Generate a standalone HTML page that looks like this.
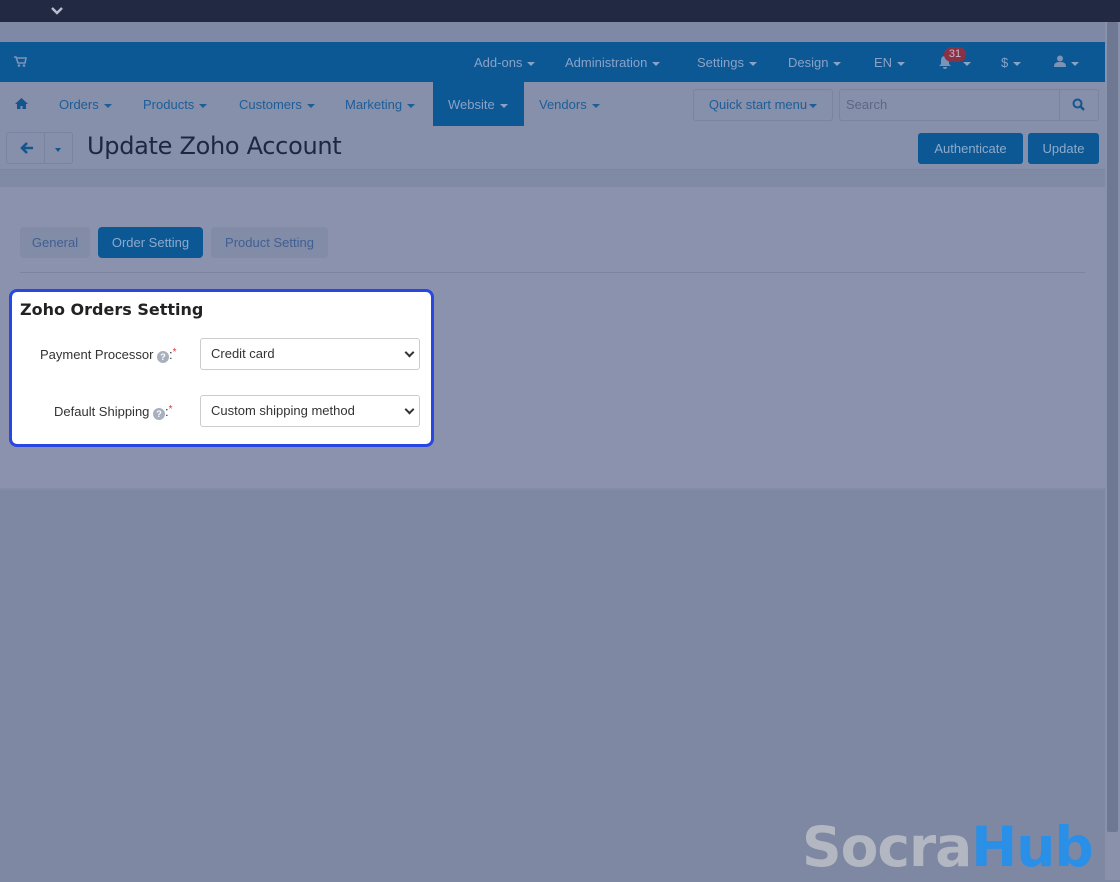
<!DOCTYPE html>
<html><head><meta charset="utf-8"><style>
*{box-sizing:border-box;margin:0;padding:0}
body{width:1120px;height:880px;overflow:hidden;background:#7f88a3;font-family:"Liberation Sans","DejaVu Sans",sans-serif;position:relative;font-size:13px}
.abs{position:absolute}
.top{left:0;top:0;width:1120px;height:22px;background:#222943}
.strip{left:0;top:22px;width:1105px;height:20px;background:#7f88a4}
.blue{left:0;top:42px;width:1105px;height:40px;background:#0b5895}
.nav{left:0;top:82px;width:1105px;height:45px;background:#8690aa}
.hdr{left:0;top:127px;width:1105px;height:43px;background:#8690aa;border-bottom:1px solid #7d86a1}
.sep{left:0;top:170px;width:1105px;height:17px;background:#808aa5}
.panel{left:0;top:187px;width:1105px;height:303px;background:#8a92ad;border-bottom:2px solid #838ca7}
.scroll{left:1105px;top:22px;width:15px;height:858px;background:#8a92ab}
.thumb{left:1107px;top:22px;width:11px;height:810px;background:#6f7893;border-radius:2px}
.t{color:#5b6f9a;white-space:nowrap}
.tw{color:#8aa2c6;white-space:nowrap}
.caret{display:inline-block;width:0;height:0;border-left:4px solid transparent;border-right:4px solid transparent;border-top:4px solid currentColor;vertical-align:middle;margin-left:5px}
.btn{background:#0c5895;color:#8eaacb;border-radius:3px;text-align:center;line-height:31px;font-size:13px}
.tab{border-radius:4px;line-height:31px;text-align:center;font-size:13px}
.sel{background:#fff;border:1px solid #ccc;border-radius:3px;color:#333;font-size:13px;padding-left:10px;line-height:30px}
.sel:after{content:"";position:absolute;right:6px;top:10px;width:5px;height:5px;border-right:2px solid #333;border-bottom:2px solid #333;transform:rotate(45deg)}
.q{display:inline-block;width:12px;height:12px;border-radius:50%;background:#a8b0bd;color:#fff;font-size:9px;font-weight:bold;text-align:center;line-height:12px;vertical-align:-1px}
.lbl{color:#333;font-size:13px;white-space:nowrap}
</style></head><body>
<div class="abs top"></div>
<svg class="abs" style="left:51px;top:7px" width="12" height="8"><path d="M1 1l5 5 5-5" stroke="#b9bdcc" stroke-width="2.4" fill="none"/></svg>
<div class="abs strip"></div>
<div class="abs blue"></div>
<svg class="abs" style="left:14px;top:56px" width="13" height="11"><path d="M0 1h2l2 6h7l1-5H3" stroke="#7d93b6" stroke-width="1.6" fill="none"/><circle cx="5" cy="9.5" r="1.3" fill="#7d93b6"/><circle cx="10" cy="9.5" r="1.3" fill="#7d93b6"/></svg>
<div class="abs tw" style="left:474px;top:55px">Add-ons<span class="caret"></span></div>
<div class="abs tw" style="left:565px;top:55px">Administration<span class="caret"></span></div>
<div class="abs tw" style="left:697px;top:55px">Settings<span class="caret"></span></div>
<div class="abs tw" style="left:788px;top:55px">Design<span class="caret"></span></div>
<div class="abs tw" style="left:874px;top:55px">EN<span class="caret"></span></div>
<svg class="abs" style="left:938px;top:55px" width="14" height="14"><path d="M7 1c-3 0-4 2-4 5v3l-2 2h12l-2-2V6c0-3-1-5-4-5z M5 12a2 2 0 004 0" fill="#7d93b6"/></svg>
<div class="abs" style="left:944px;top:47px;width:22px;height:15px;border-radius:8px;background:#8a3245;color:#c8b8c5;font-size:11px;text-align:center;line-height:15px">31</div>
<div class="abs tw" style="left:958px;top:55px"><span class="caret"></span></div>
<div class="abs tw" style="left:1001px;top:55px">$<span class="caret"></span></div>
<svg class="abs" style="left:1054px;top:55px" width="12" height="12"><circle cx="6" cy="3.5" r="3" fill="#7d93b6"/><path d="M0 12c0-4 2-5 6-5s6 1 6 5z" fill="#7d93b6"/></svg>
<div class="abs tw" style="left:1066px;top:55px"><span class="caret"></span></div>

<div class="abs nav"></div>
<svg class="abs" style="left:15px;top:98px" width="13" height="11"><path d="M6.5 0L0 6h2v5h3.5V8h2v3H11V6h2z" fill="#14558f"/></svg>
<div class="abs t" style="left:59px;top:97px;color:#1d5d98">Orders<span class="caret"></span></div>
<div class="abs t" style="left:143px;top:97px;color:#1d5d98">Products<span class="caret"></span></div>
<div class="abs t" style="left:239px;top:97px;color:#1d5d98">Customers<span class="caret"></span></div>
<div class="abs t" style="left:345px;top:97px;color:#1d5d98">Marketing<span class="caret"></span></div>
<div class="abs" style="left:433px;top:82px;width:91px;height:44px;background:#0b5895"></div>
<div class="abs tw" style="left:448px;top:97px">Website<span class="caret"></span></div>
<div class="abs t" style="left:539px;top:97px;color:#1d5d98">Vendors<span class="caret"></span></div>
<div class="abs" style="left:693px;top:89px;width:140px;height:32px;border:1px solid #7a84a0;border-radius:3px;color:#1d5d98;line-height:30px;text-align:center">Quick start menu<span class="caret" style="margin-left:2px"></span></div>
<div class="abs" style="left:839px;top:89px;width:260px;height:32px;border:1px solid #7a84a0;border-radius:3px;color:#5c6786;line-height:30px;padding-left:6px">Search</div>
<div class="abs" style="left:1059px;top:89px;width:1px;height:32px;background:#7a84a0"></div>
<svg class="abs" style="left:1072px;top:98px" width="13" height="13"><circle cx="5.5" cy="5.5" r="4" stroke="#14558f" stroke-width="2" fill="none"/><path d="M8.5 8.5l3.5 3.5" stroke="#14558f" stroke-width="2.4"/></svg>

<div class="abs hdr"></div>
<div class="abs" style="left:6px;top:132px;width:67px;height:32px;border:1px solid #7a84a0;border-radius:3px"></div>
<div class="abs" style="left:44px;top:132px;width:1px;height:32px;background:#7a84a0"></div>
<svg class="abs" style="left:20px;top:142px" width="14" height="12"><path d="M7 1L2 6l5 5M2 6h11" stroke="#14558f" stroke-width="2.6" fill="none"/></svg>
<div class="abs" style="left:55px;top:145px;color:#14558f;font-size:8px"><span class="caret" style="margin:0;border-width:4px 3.5px 0"></span></div>
<div class="abs" style="left:87px;top:132px;font-size:24px;color:#1f2740;font-family:'DejaVu Sans',sans-serif;letter-spacing:-0.3px">Update Zoho Account</div>
<div class="abs btn" style="left:918px;top:133px;width:105px">Authenticate</div>
<div class="abs btn" style="left:1028px;top:133px;width:71px">Update</div>
<div class="abs sep"></div>
<div class="abs panel"></div>
<div class="abs tab" style="left:20px;top:227px;width:70px;background:#838ca7;color:#3f5f93">General</div>
<div class="abs tab" style="left:98px;top:227px;width:105px;background:#0b5895;color:#8eaacb">Order Setting</div>
<div class="abs tab" style="left:211px;top:227px;width:117px;background:#838ca7;color:#3f5f93">Product Setting</div>
<div class="abs" style="left:20px;top:272px;width:1065px;height:1px;background:#7b849f"></div>
<div class="abs" style="left:9px;top:289px;width:425px;height:158px;background:#fff;border:3px solid #2847e2;border-radius:8px"></div>
<div class="abs" style="left:20px;top:300px;font-size:16px;font-weight:bold;color:#222;font-family:'DejaVu Sans',sans-serif">Zoho Orders Setting</div>
<div class="abs lbl" style="left:40px;top:347px">Payment Processor <span class="q">?</span>:<span style="color:#d33;font-size:10px;vertical-align:4px">*</span></div>
<div class="abs lbl" style="left:54px;top:404px">Default Shipping <span class="q">?</span>:<span style="color:#d33;font-size:10px;vertical-align:4px">*</span></div>
<div class="abs sel" style="left:200px;top:338px;width:220px;height:32px">Credit card</div>
<div class="abs sel" style="left:200px;top:395px;width:220px;height:32px">Custom shipping method</div>

<div class="abs scroll"></div>
<div class="abs thumb"></div>
<div class="abs" style="left:802px;top:812px;font-size:55px;font-weight:bold;font-family:'DejaVu Sans',sans-serif;letter-spacing:-1px;line-height:70px;white-space:nowrap"><span style="color:#b3b7c2">Socra</span><span style="color:#2a8fe6">Hub</span></div>
</body></html>
